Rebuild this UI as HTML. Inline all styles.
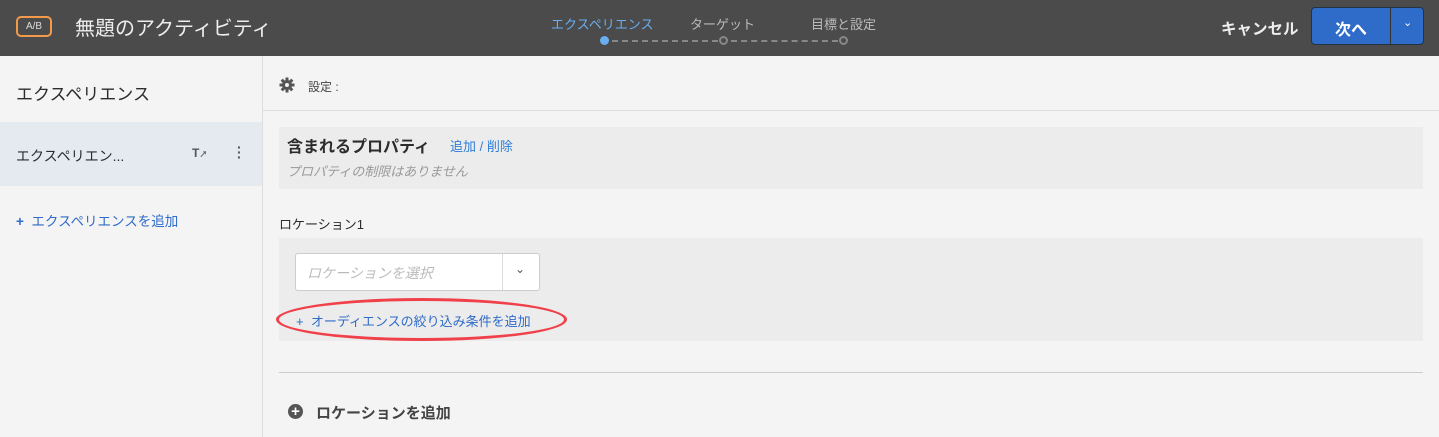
<!DOCTYPE html>
<html><head><meta charset="utf-8"><style>
*{margin:0;padding:0;box-sizing:border-box}
body{width:1439px;height:437px;overflow:hidden;background:#f4f4f4;font-family:"Liberation Sans","Noto Sans CJK JP",sans-serif;position:relative;color:#2c2c2c}
.a{position:absolute;white-space:nowrap}
</style></head><body>
<div class="a" style="left:0;top:0;width:1439px;height:56px;background:#4b4b4b"></div>
<div class="a" style="left:16px;top:16px;width:36px;height:21px;border:2px solid #f29a4a;border-radius:5px;color:#ddd;font-size:10px;line-height:17px;text-align:center">A/B</div>
<div class="a" style="left:75px;top:15px;font-size:20px;color:#eee;line-height:28px">無題のアクティビティ</div>
<div class="a" style="left:551px;top:14px;font-size:13px;color:#6aaef0">エクスペリエンス</div>
<div class="a" style="left:690px;top:14px;font-size:13px;color:#bbb">ターゲット</div>
<div class="a" style="left:811px;top:14px;font-size:13px;color:#bbb">目標と設定</div>
<div class="a" style="left:600px;top:36px;width:9px;height:9px;border-radius:50%;background:#6aaef0"></div>
<div class="a" style="left:612px;top:40px;width:106px;border-top:2px dashed #888"></div>
<div class="a" style="left:719px;top:36px;width:9px;height:9px;border-radius:50%;border:2px solid #888"></div>
<div class="a" style="left:731px;top:40px;width:107px;border-top:2px dashed #888"></div>
<div class="a" style="left:839px;top:36px;width:9px;height:9px;border-radius:50%;border:2px solid #888"></div>
<div class="a" style="left:1221px;top:17px;font-size:15.5px;font-weight:bold;color:#eee">キャンセル</div>
<div class="a" style="left:1311px;top:7px;width:113px;height:38px;background:#2f6bc8;border-radius:4px;border:1px solid #234"></div>
<div class="a" style="left:1390px;top:8px;width:1px;height:36px;background:#333"></div>
<div class="a" style="left:1335px;top:16px;font-size:16px;font-weight:bold;color:#fff">次へ</div>
<div class="a" style="left:1403px;top:16px;font-size:11px;color:#fff">⌄</div>

<div class="a" style="left:262px;top:56px;width:1px;height:381px;background:#ddd"></div>
<div class="a" style="left:16px;top:80px;font-size:17px;color:#2c2c2c">エクスペリエンス</div>
<div class="a" style="left:0;top:122px;width:262px;height:64px;background:#e5e9f0"></div>
<div class="a" style="left:16px;top:146px;font-size:14px">エクスペリエン...</div>
<div class="a" style="left:192px;top:146px;font-size:12px;font-weight:bold;color:#555">T<span style="font-size:8px">↗</span></div>
<div class="a" style="left:237px;top:145px;font-size:14px;font-weight:bold;color:#555;line-height:5px">·<br>·<br>·</div>
<div class="a" style="left:16px;top:210px;font-size:13.5px;color:#2f6bc8"><b>+</b>&nbsp; エクスペリエンスを追加</div>

<svg class="a" style="left:279px;top:77px" width="16" height="16" viewBox="0 0 16 16"><g fill="#555"><circle cx="8" cy="8" r="5"/><rect x="6.5" y="0.5" width="3" height="15"/><rect x="0.5" y="6.5" width="15" height="3"/><rect x="6.5" y="0.5" width="3" height="15" transform="rotate(45 8 8)"/><rect x="6.5" y="0.5" width="3" height="15" transform="rotate(-45 8 8)"/></g><circle cx="8" cy="8" r="2" fill="#f4f4f4"/></svg>
<div class="a" style="left:308px;top:78px;font-size:12px;color:#444">設定 :</div>
<div class="a" style="left:263px;top:110px;width:1176px;height:1px;background:#ddd"></div>
<div class="a" style="left:279px;top:127px;width:1144px;height:62px;background:#ececec"></div>
<div class="a" style="left:287px;top:133px;font-size:16px;font-weight:bold;color:#2c2c2c">含まれるプロパティ</div>
<div class="a" style="left:450px;top:136px;font-size:13px;color:#2f7ed8">追加 / 削除</div>
<div class="a" style="left:287px;top:161px;font-size:13px;font-style:italic;color:#999">プロパティの制限はありません</div>
<div class="a" style="left:279px;top:214px;font-size:13px">ロケーション1</div>
<div class="a" style="left:279px;top:238px;width:1144px;height:103px;background:#ececec"></div>
<div class="a" style="left:295px;top:253px;width:245px;height:38px;background:#fff;border:1px solid #ccc;border-radius:3px"></div>
<div class="a" style="left:502px;top:254px;width:1px;height:36px;background:#ddd"></div>
<div class="a" style="left:307px;top:263px;font-size:14px;font-style:italic;color:#bbb">ロケーションを選択</div>
<div class="a" style="left:515px;top:262px;font-size:12px;color:#555">⌄</div>
<div class="a" style="left:296px;top:311px;font-size:13px;color:#2f6bc8">+&nbsp; オーディエンスの絞り込み条件を追加</div>
<div class="a" style="left:276px;top:298px;width:291px;height:43px;border:3px solid #f0404a;border-radius:50%"></div>
<div class="a" style="left:279px;top:372px;width:1144px;height:1px;background:#ccc"></div>
<div class="a" style="left:288px;top:404px;width:15px;height:15px;border-radius:50%;background:#555;color:#fff;font-size:15px;font-weight:bold;line-height:15px;text-align:center">+</div>
<div class="a" style="left:316px;top:402px;font-size:15px;font-weight:bold;color:#444">ロケーションを追加</div>
</body></html>
